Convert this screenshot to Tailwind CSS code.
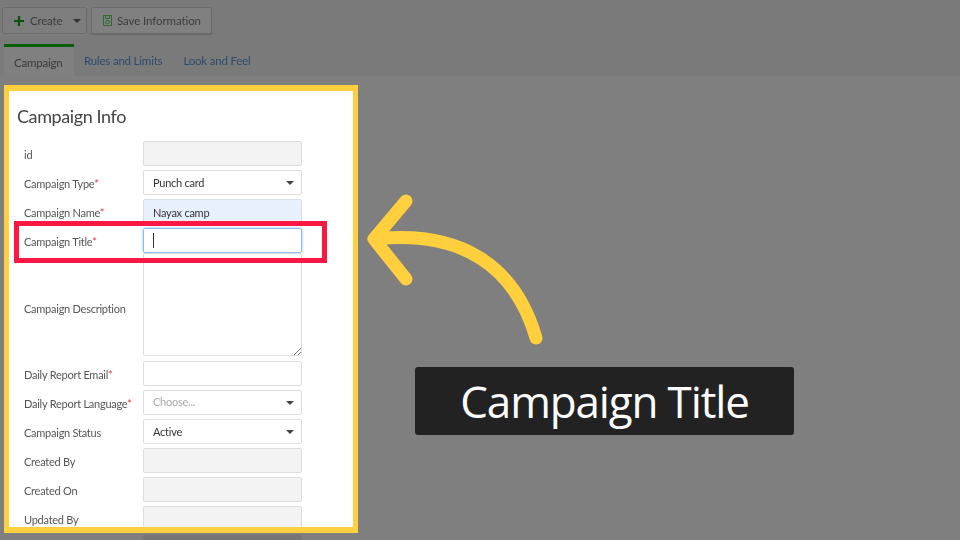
<!DOCTYPE html>
<html lang="en">
<head>
<meta charset="utf-8">
<script src="https://cdn.jsdelivr.net/npm/@tailwindcss/browser@4"></script>
<title>Campaign</title>
</head>
<body class="m-0">
<div class="relative w-[960px] h-[540px] overflow-hidden bg-[#7f7f7f] font-['Lato',sans-serif]">

  <!-- toolbar -->
  <div class="flex h-[44px] bg-[#7a7a7a] pl-[2px] pt-[7px] gap-[4px] items-start blur-[0.4px]">
    <div class="flex items-center w-[85px] h-[27px] border border-[#6c6c6c] rounded-[2px] bg-[#7d7d7d] pl-[10px] text-[11.5px] tracking-[-0.2px] text-[#3c3c3c]">
      <svg class="w-[12px] h-[12px] mr-[5px]" viewBox="0 0 12 12"><path d="M6 1v10M1 6h10" stroke="#0c500c" stroke-width="2.2" fill="none"/></svg>
      <span>Create</span>
      <span class="ml-[11px] w-0 h-0 border-x-[4px] border-x-transparent border-t-[4px] border-t-[#333]"></span>
    </div>
    <div class="flex items-center w-[121px] h-[27px] border border-[#6c6c6c] rounded-[2px] bg-[#808080] pl-[9px] text-[11.5px] tracking-[-0.1px] text-[#3c3c3c] shadow-[0_1px_1px_#666]">
      <svg class="w-[13px] h-[13px] mr-[3px]" viewBox="0 0 13 13" fill="none" stroke="#2f6b2f" stroke-width="1"><path d="M2.500 1.500h8v10h-8zM4.500 1.500v3h4v-3"/><circle cx="6.500" cy="8" r="1.800"/></svg>
      <span>Save Information</span>
    </div>
  </div>

  <!-- tabs -->
  <div class="flex h-[32px] pl-[4px] bg-[#7a7a7a] text-[11.5px] tracking-[-0.2px] blur-[0.4px]">
    <div class="w-[70px] h-[32px] border-t-[3px] border-[#0b5c0b] bg-[#808080] text-[#3a3a3a] pl-[10px] pt-[7px]">Campaign</div>
    <div class="pl-[10px] pt-[8px] text-[#2f4a6b]">Rules and Limits</div>
    <div class="pl-[21px] pt-[8px] text-[#2f4a6b]">Look and Feel</div>
  </div>

  <div class="h-[9px]"></div>

  <!-- form card -->
  <div class="w-[354px] h-[448px] ml-[4px] border-x-[5px] border-y-[6px] border-[#ffcf3d] bg-white overflow-hidden">
    <div class="blur-[0.4px] text-[11px] tracking-[-0.25px] text-[#555]">
      <div class="text-[18px] tracking-[-0.4px] text-[#444] pl-[8px] pt-[12px] h-[50px] leading-[27px]">Campaign Info</div>
      <div class="flex flex-col gap-[4px] pl-[15px]">
        <div class="flex items-center h-[25px]"><span class="w-[119px] pt-[3px]">id</span><span class="w-[159px] h-[25px] border border-[#ddd] rounded-[2px] bg-[#f3f3f3]"></span></div>
        <div class="flex items-center h-[25px]"><span class="w-[119px] pt-[3px]">Campaign Type<b class="font-normal text-[#e03a4a]">*</b></span><span class="flex items-center justify-between w-[159px] h-[25px] border border-[#ddd] rounded-[2px] pl-[9px] pr-[7px] text-[#333]"><span class="pt-[2px]">Punch card</span><i class="w-0 h-0 border-x-[4px] border-x-transparent border-t-[4px] border-t-[#444]"></i></span></div>
        <div class="flex items-center h-[25px]"><span class="w-[119px] pt-[3px]">Campaign Name<b class="font-normal text-[#e03a4a]">*</b></span><span class="flex items-center w-[159px] h-[25px] border border-[#d5deeb] rounded-[2px] bg-[#e8f0fe] px-[9px] text-[#333]"><span class="pt-[3px]">Nayax camp</span></span></div>
        <div class="flex items-center h-[25px]"><span class="w-[119px] pt-[3px]">Campaign Title<b class="font-normal text-[#e03a4a]">*</b></span><span class="flex items-center w-[159px] h-[25px] border border-[#8fbcec] rounded-[2px] px-[9px] shadow-[0_0_3px_#8fbcec]"><i class="w-px h-[15px] bg-[#333]"></i></span></div>
        <div class="flex items-center h-[103px] -mt-[4px]"><span class="w-[119px] pt-[9px]">Campaign Description</span><span class="relative w-[159px] h-[103px] border border-[#ddd] rounded-[2px]"><svg class="absolute right-0 bottom-0 w-[8px] h-[8px]" viewBox="0 0 8 8" stroke="#777" fill="none"><path d="M1 8l7-7M5 8l3-3"/></svg></span></div>
        <div class="flex items-center h-[25px] mt-[1px]"><span class="w-[119px] pt-[3px]">Daily Report Email<b class="font-normal text-[#e03a4a]">*</b></span><span class="w-[159px] h-[25px] border border-[#ddd] rounded-[2px]"></span></div>
        <div class="flex items-center h-[25px]"><span class="w-[119px] pt-[3px] whitespace-nowrap">Daily Report Language<b class="font-normal text-[#e03a4a]">*</b></span><span class="flex items-center justify-between w-[159px] h-[25px] border border-[#ddd] rounded-[2px] pl-[9px] pr-[7px] text-[#aaa]">Choose...<i class="w-0 h-0 border-x-[4px] border-x-transparent border-t-[4px] border-t-[#444]"></i></span></div>
        <div class="flex items-center h-[25px]"><span class="w-[119px] pt-[3px]">Campaign Status</span><span class="flex items-center justify-between w-[159px] h-[25px] border border-[#ddd] rounded-[2px] pl-[9px] pr-[7px] text-[#333]"><span class="pt-[2px]">Active</span><i class="w-0 h-0 border-x-[4px] border-x-transparent border-t-[4px] border-t-[#444]"></i></span></div>
        <div class="flex items-center h-[25px]"><span class="w-[119px] pt-[3px]">Created By</span><span class="w-[159px] h-[25px] border border-[#ddd] rounded-[2px] bg-[#f3f3f3]"></span></div>
        <div class="flex items-center h-[25px]"><span class="w-[119px] pt-[3px]">Created On</span><span class="w-[159px] h-[25px] border border-[#ddd] rounded-[2px] bg-[#f3f3f3]"></span></div>
        <div class="flex items-center h-[25px]"><span class="w-[119px] pt-[3px]">Updated By</span><span class="w-[159px] h-[25px] border border-[#ddd] rounded-[2px] bg-[#f3f3f3]"></span></div>
      </div>
    </div>
  </div>
  <div class="w-[159px] h-[6px] ml-[143px] mt-[2px] bg-[#757575] rounded-t-[2px]"></div>

  <!-- overlays on top of the screenshot -->
  <div class="absolute left-[14px] top-[221px] w-[313px] h-[42px] border-[5px] border-[#ff1744]"></div>
  <svg class="absolute left-[360px] top-[180px] w-[200px] h-[180px]" viewBox="0 0 200 180" fill="none" stroke="#ffcf3d" stroke-width="13" stroke-linecap="round" stroke-linejoin="round">
    <path d="M46 21L14 59L46 99"/>
    <path d="M16 59C100 50 155 85 176 158"/>
  </svg>
  <div class="absolute left-[415px] top-[367px] w-[379px] h-[68px] rounded-[3px] bg-[#222] flex items-center justify-center text-white text-[44px] tracking-[-1.15px] font-['Open_Sans',sans-serif]">Campaign Title</div>
</div>
</body>
</html>
